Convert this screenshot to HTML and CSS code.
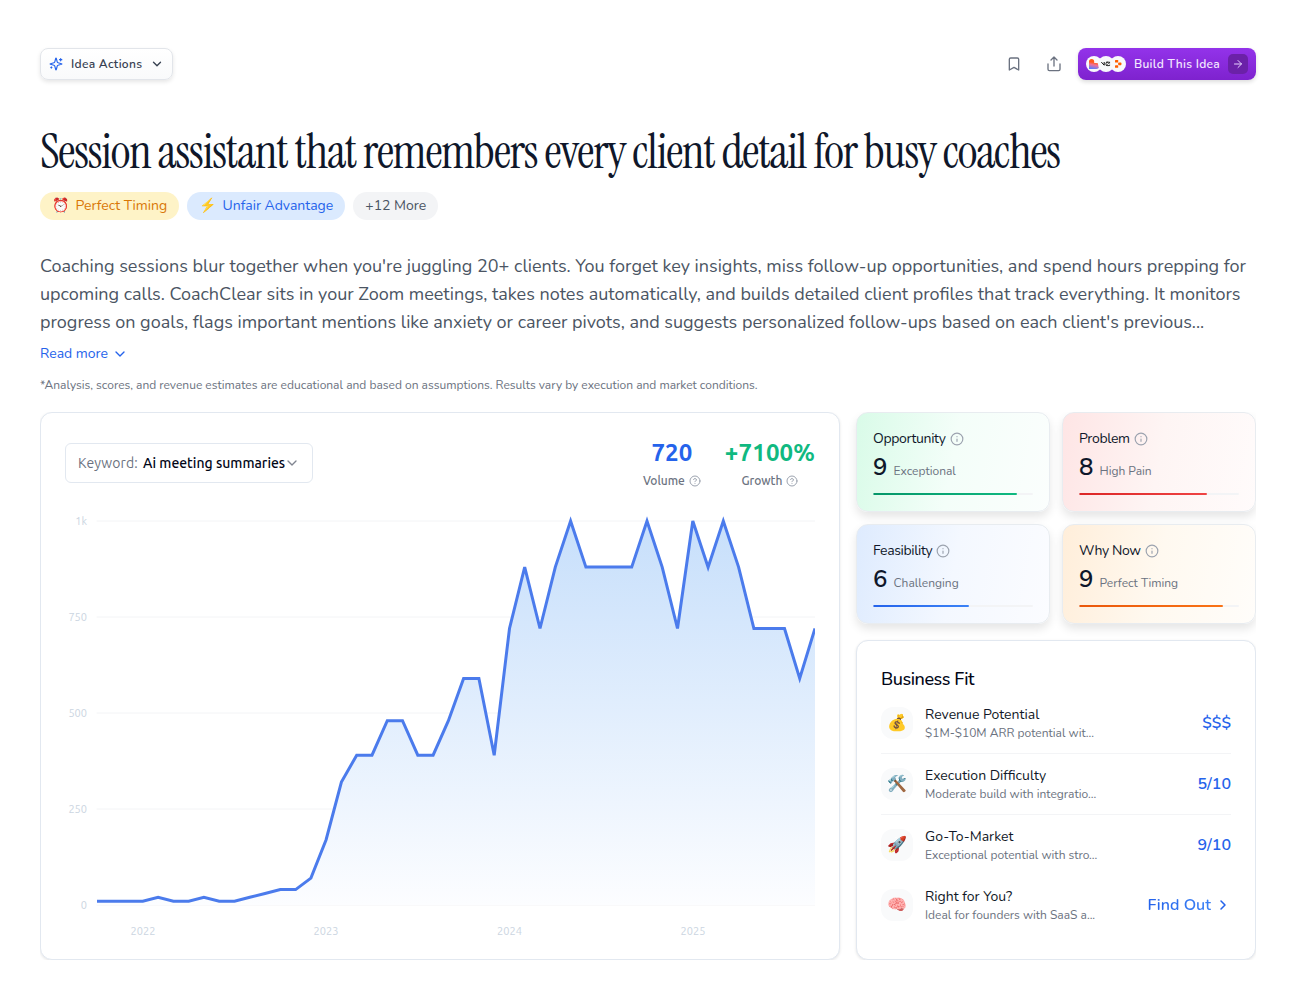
FILE: index.html
```html
<!DOCTYPE html>
<html lang="en">
<head>
<meta charset="utf-8">
<title>Session assistant for busy coaches</title>
<link rel="stylesheet" href="styles.css">
</head>
<body>
<main class="page">
  <header class="toolbar">
    <button class="btn-actions">
      <svg class="sparkles" viewBox="0 0 24 24"><path d="M9.94 15.5A2 2 0 0 0 8.5 14.06l-6.14-1.58a.5.5 0 0 1 0-.96L8.5 9.94A2 2 0 0 0 9.94 8.5l1.58-6.14a.5.5 0 0 1 .96 0L14.06 8.5a2 2 0 0 0 1.44 1.44l6.14 1.58a.5.5 0 0 1 0 .96L15.5 14.06a2 2 0 0 0-1.44 1.44l-1.58 6.14a.5.5 0 0 1-.96 0z"/><path d="M20 2.500v4M22 4.500h-4M4 17v2M5 18h-2"/></svg>
      <span class="label-actions">Idea Actions</span>
      <svg class="chev" viewBox="0 0 24 24"><path d="m6 9 6 6 6-6"/></svg>
    </button>
    <div class="toolbar-right">
      <svg class="tool" viewBox="0 0 24 24"><path d="m19 21-7-4-7 4V5a2 2 0 0 1 2-2h10a2 2 0 0 1 2 2z"/></svg>
      <svg class="tool share" viewBox="0 0 24 24"><path d="M3 12v8a2 2 0 0 0 2 2h14a2 2 0 0 0 2-2v-8M16.500 6 12 1.500 7.500 6M12 1.500V15"/></svg>
      <button class="btn-build">
        <span class="logos">
          <svg viewBox="0 0 16 16"><defs><linearGradient id="heart" x1="0.600" y1="0" x2="0.400" y2="1"><stop offset=".35" stop-color="#ff5a1f"/><stop offset=".6" stop-color="#f0709a"/><stop offset="1" stop-color="#5b7bff"/></linearGradient></defs><circle cx="8" cy="8" r="8" fill="#f8f9fb"/><path d="M3 5.700a2.600 2.600 0 0 1 5.200 0v1.200h2a3 3 0 0 1 0 6H3z" fill="url(#heart)"/></svg>
          <svg viewBox="0 0 16 16"><circle cx="8" cy="8" r="8" fill="#f8f9fb"/><path d="M3.600 6.400l2.600 2.800V6.400" fill="none" stroke="#111" stroke-width="1"/><rect x="8" y="6.200" width="4.200" height="3.400" rx="1" fill="none" stroke="#111" stroke-width=".9"/><path d="M8.300 9.400l3.500-3" stroke="#111" stroke-width=".6"/></svg>
          <svg viewBox="0 0 16 16"><circle cx="8" cy="8" r="8" fill="#f8f9fb"/><g fill="#ff5f00"><rect x="5" y="4" width="3.200" height="2.600" rx=".6"/><rect x="8.200" y="6.600" width="3.200" height="2.600" rx=".6"/><rect x="5" y="9.200" width="3.200" height="2.600" rx=".6"/></g></svg>
        </span>
        <span class="label-build">Build This Idea</span>
        <span class="arrow"><svg viewBox="0 0 24 24"><path d="M5 12h14M12 5l7 7-7 7"/></svg></span>
      </button>
    </div>
  </header>

  <h1 class="title">Session assistant that remembers every client detail for busy coaches</h1>

  <div class="tags">
    <span class="tag tag-amber"><span class="emoji">⏰</span>Perfect Timing</span>
    <span class="tag tag-blue"><span class="emoji">⚡</span>Unfair Advantage</span>
    <span class="tag tag-gray">+12 More</span>
  </div>

  <p class="summary">
    <span class="line">Coaching sessions blur together when you're juggling 20+ clients. You forget key insights, miss follow-up opportunities, and spend hours prepping for</span>
    <span class="line">upcoming calls. CoachClear sits in your Zoom meetings, takes notes automatically, and builds detailed client profiles that track everything. It monitors</span>
    <span class="line">progress on goals, flags important mentions like anxiety or career pivots, and suggests personalized follow-ups based on each client's previous...</span>
  </p>
  <a class="read-more">Read more<svg viewBox="0 0 24 24"><path d="m6 9 6 6 6-6"/></svg></a>
  <p class="note">*Analysis, scores, and revenue estimates are educational and based on assumptions. Results vary by execution and market conditions.</p>

  <div class="grid">
    <section class="panel trend">
      <div class="trend-head">
        <div class="select"><span class="kw">Keyword:</span><span class="kv">Ai meeting summaries</span><svg viewBox="0 0 24 24"><path d="m6 9 6 6 6-6"/></svg></div>
        <div class="stats">
          <div class="stat"><div class="num blue">720</div><div class="cap">Volume<svg viewBox="0 0 24 24"><circle cx="12" cy="12" r="10"/><path d="M9.090 9a3 3 0 0 1 5.830 1c0 2-3 3-3 3M12 17h.010"/></svg></div></div>
          <div class="stat"><div class="num green">+7100%</div><div class="cap">Growth<svg viewBox="0 0 24 24"><circle cx="12" cy="12" r="10"/><path d="M9.090 9a3 3 0 0 1 5.830 1c0 2-3 3-3 3M12 17h.010"/></svg></div></div>
        </div>
      </div>
      <svg class="chart" viewBox="0 0 750 438">
        <defs><linearGradient id="area" x1="0" y1="0" x2="0" y2="1"><stop offset="0" stop-color="#c7dffb"/><stop offset="1" stop-color="#fcfdff"/></linearGradient></defs>
        <path class="gridline" d="M32 16H750M32 112H750M32 208H750M32 304H750M32 400H750"/>
        <path class="area" fill="url(#area)" d="M32 396.200H77.800L93.100 392.300 108.400 396.200H123.700L138.900 392.300 154.200 396.200H169.500L184.800 392.300 200 388.500 215.300 384.600H230.600L245.900 373.100 261.100 334.700 276.400 277.100 291.700 250.200H307L322.300 215.700H337.500L352.800 250.200H368.100L383.400 215.700 398.600 173.400H413.900L429.200 250.200 444.500 123.500 459.700 62.100 475 123.500 490.300 62.100 505.600 16 520.900 62.100H566.700L582 16 597.200 62.100 612.500 123.500 627.800 16 643.100 62.100 658.300 16 673.600 62.100 688.900 123.500H719.500L734.700 173.400 750 123.500V400H32Z"/>
        <path class="series" d="M32 396.200H77.800L93.100 392.300 108.400 396.200H123.700L138.900 392.300 154.200 396.200H169.500L184.800 392.300 200 388.500 215.300 384.600H230.600L245.900 373.100 261.100 334.700 276.400 277.100 291.700 250.200H307L322.300 215.700H337.500L352.800 250.200H368.100L383.400 215.700 398.600 173.400H413.900L429.200 250.200 444.500 123.500 459.700 62.100 475 123.500 490.300 62.100 505.600 16 520.900 62.100H566.700L582 16 597.200 62.100 612.500 123.500 627.800 16 643.100 62.100 658.300 16 673.600 62.100 688.900 123.500H719.500L734.700 173.400 750 123.500"/>
        <g class="axis y"><text x="22" y="20">1k</text><text x="22" y="116">750</text><text x="22" y="212">500</text><text x="22" y="308">250</text><text x="22" y="404">0</text></g>
        <g class="axis x"><text x="78" y="430">2022</text><text x="261" y="430">2023</text><text x="444.500" y="430">2024</text><text x="628" y="430">2025</text></g>
      </svg>
    </section>

    <div class="side">
      <div class="scores">
        <article class="score s-green"><h3>Opportunity<svg viewBox="0 0 24 24"><circle cx="12" cy="12" r="10"/><path d="M12 16v-4M12 8h.010"/></svg></h3><p><b>9</b>Exceptional</p><div class="bar"><i style="width:90%"></i></div></article>
        <article class="score s-red"><h3>Problem<svg viewBox="0 0 24 24"><circle cx="12" cy="12" r="10"/><path d="M12 16v-4M12 8h.010"/></svg></h3><p><b>8</b>High Pain</p><div class="bar"><i style="width:80%"></i></div></article>
        <article class="score s-blue"><h3>Feasibility<svg viewBox="0 0 24 24"><circle cx="12" cy="12" r="10"/><path d="M12 16v-4M12 8h.010"/></svg></h3><p><b>6</b>Challenging</p><div class="bar"><i style="width:60%"></i></div></article>
        <article class="score s-orange"><h3>Why Now<svg viewBox="0 0 24 24"><circle cx="12" cy="12" r="10"/><path d="M12 16v-4M12 8h.010"/></svg></h3><p><b>9</b>Perfect Timing</p><div class="bar"><i style="width:90%"></i></div></article>
      </div>
      <section class="panel fit">
        <h2>Business Fit</h2>
        <div class="row"><span class="ico">💰</span><div class="txt"><h4>Revenue Potential</h4><p>$1M-$10M ARR potential wit...</p></div><strong>$$$</strong></div>
        <div class="row"><span class="ico">🛠️</span><div class="txt"><h4>Execution Difficulty</h4><p>Moderate build with integratio...</p></div><strong>5/10</strong></div>
        <div class="row plain"><span class="ico">🚀</span><div class="txt"><h4>Go-To-Market</h4><p>Exceptional potential with stro...</p></div><strong>9/10</strong></div>
        <div class="row plain"><span class="ico">🧠</span><div class="txt"><h4>Right for You?</h4><p>Ideal for founders with SaaS a...</p></div><strong class="find"><span>Find Out</span><svg viewBox="0 0 24 24"><path d="m9 18 6-6-6-6"/></svg></strong></div>
      </section>
    </div>
  </div>
</main>
</body>
</html>
```
FILE: styles.css
```css
* { box-sizing: border-box; }
body {
  margin: 0;
  background: #fff;
  color: #0f172a;
  font-family: Nunito, Lato, sans-serif;
}
h1, h2, h3, h4, p { margin: 0; font-weight: 400; }
button { font: inherit; border: 0; cursor: pointer; }
svg { fill: none; stroke: currentColor; stroke-width: 2; stroke-linecap: round; stroke-linejoin: round; flex: none; display: block; }
.page { width: 1296px; height: 1000px; padding: 48px 40px 0; overflow: hidden; }

/* Toolbar */
.toolbar { display: flex; justify-content: space-between; align-items: center; height: 32px; }
.btn-actions {
  display: flex; align-items: center; height: 32px; width: 133px; padding: 0 8px;
  border: 1px solid #e2e5ea; border-radius: 8px;
  background: linear-gradient(#fff, #f9fafb); color: #374151;
  font-size: 12px; font-weight: 600; letter-spacing: .3px;
  box-shadow: 0 2px 4px rgba(0, 0, 0, .1);
}
.sparkles { width: 14px; height: 14px; color: #2563eb; margin-right: 8px; }
.label-actions { width: 71px; text-align: left; white-space: nowrap; }
.btn-actions .chev { width: 14px; height: 14px; margin-left: 8px; stroke-width: 2.300; }
.toolbar-right { display: flex; align-items: center; }
.tool { width: 16px; height: 16px; color: #6b7280; margin-right: 24px; }
.tool.share { margin-right: 16px; }
.btn-build {
  display: flex; align-items: center; height: 32px; width: 178px; padding: 0 8px;
  border-radius: 8px; color: #f3e8ff;
  background: linear-gradient(#9333ea, #7e22ce);
  font-size: 12px; font-weight: 600; letter-spacing: .3px;
  box-shadow: 0 2px 4px rgba(0, 0, 0, .14);
}
.logos { display: flex; margin-right: 8px; }
.logos svg { width: 16px; height: 16px; stroke: none; }
.logos svg + svg { margin-left: -4px; }
.label-build { width: 86px; text-align: left; white-space: nowrap; }
.arrow { display: grid; place-items: center; width: 20px; height: 20px; margin-left: 8px; border-radius: 5px; background: #6b21a8; color: #e9d5ff; }
.arrow svg { width: 12px; height: 12px; }

/* Heading */
.title {
  margin-top: 48px; height: 48px; line-height: 48px;
  font-family: "Instrument Serif", "Liberation Serif", serif; font-size: 48px;
  letter-spacing: -1.200px; white-space: nowrap;
}
.tags { display: flex; gap: 8px; margin-top: 16px; font-size: 14px; line-height: 20px; }
.tag { display: flex; height: 28px; padding: 4px 12px; border-radius: 14px; white-space: nowrap; }
.emoji { width: 23.400px; margin-top: -1px; font-family: "Noto Color Emoji", sans-serif; }
.tag-amber { background: #fef3c7; color: #d97706; }
.tag-blue { background: #dbeafe; color: #2563eb; }
.tag-gray { background: #f3f4f6; color: #4b5563; }

.summary { margin-top: 32px; font-size: 18px; line-height: 28px; color: #4b5563; }
.line { display: block; white-space: nowrap; }
.read-more { display: flex; align-items: center; gap: 4px; height: 20px; margin-top: 7px; font-size: 14px; color: #2563eb; }
.read-more svg { width: 16px; height: 16px; margin-top: 2px; }
.note { margin-top: 14px; height: 16px; font-size: 12px; line-height: 16px; color: #6b7280; white-space: nowrap; }

.grid { display: grid; grid-template-columns: 800px 400px; grid-template-rows: 548px; gap: 16px; margin-top: 19px; overflow: hidden; }
.panel { border: 1px solid #e2e8f0; border-radius: 12px; background: #fff; box-shadow: 0 1px 3px rgba(0, 0, 0, .1); }

/* Keyword trend */
.trend { padding: 24px 24px 16px; font-family: Ubuntu, "Open Sans", sans-serif; }
.trend-head { display: flex; justify-content: space-between; height: 68px; }
.select { display: flex; align-items: center; width: 248px; height: 40px; margin-top: 6px; padding: 0 12px; border: 1px solid #e2e8f0; border-radius: 6px; font-size: 14px; white-space: nowrap; }
.kw { width: 65px; color: #6b7280; letter-spacing: .1px; }
.kv { width: 141px; color: #020617; font-weight: 500; }
.select svg { width: 16px; height: 16px; color: #808590; }
.stats { display: flex; gap: 24px; }
.stat { display: flex; flex-direction: column; align-items: center; }
.num { font-size: 24px; line-height: 32px; font-weight: 700; }
.num.blue { color: #2563eb; }
.num.green { color: #10b981; letter-spacing: .150px; }
.cap { display: flex; align-items: center; gap: 4px; font-size: 12px; line-height: 16px; margin-top: 4px; color: #6b7280; font-weight: 500; }
.cap svg { width: 12px; height: 12px; color: #9ca3af; }
.chart { width: 750px; height: 438px; }
.gridline { stroke: #f3f4f6; stroke-width: 1; }
.area { stroke: none; }
.series { stroke: #4b7bec; stroke-width: 3; stroke-linecap: butt; stroke-linejoin: miter; }
.axis { fill: #cbd5e1; stroke: none; font-size: 11px; }
.axis.y { text-anchor: end; }
.axis.x { text-anchor: middle; }

/* Score cards */
.side { display: flex; flex-direction: column; gap: 16px; }
.scores { display: grid; grid-template-columns: 194px 194px; grid-auto-rows: 100px; gap: 12px; }
.score { padding: 15px 16px; border: 1px solid #e8ecf0; border-radius: 12px; box-shadow: 0 5px 10px rgba(0, 0, 0, .1); }
.score h3 { display: flex; align-items: center; gap: 4px; height: 21px; font-size: 14px; font-weight: 400; letter-spacing: -.350px; white-space: nowrap; }
.score h3 svg { width: 14px; height: 14px; color: #9ca3af; }
.score p { display: flex; align-items: baseline; gap: 6.500px; margin-top: 2px; height: 32px; line-height: 32px; font-size: 12px; color: #6b7280; white-space: nowrap; }
.score b { width: 14px; font-size: 24px; font-weight: 600; color: #0f172a; }
.bar { height: 2px; margin-top: 10px; border-radius: 2px; background: #f3f4f6; overflow: hidden; }
.bar i { display: block; height: 2px; border-radius: 2px; }
.s-green { background: linear-gradient(100deg, #d9fbe8, #f4fef9 50%, #fbfefd); }
.s-green i { background: linear-gradient(90deg, #059669, #10b981); }
.s-red { background: linear-gradient(100deg, #fee5e5, #fef5f4 50%, #fffbfb); }
.s-red i { background: linear-gradient(90deg, #dc2626, #ef4444); }
.s-blue { background: linear-gradient(100deg, #deebfe, #f4f8ff 50%, #fbfcff); }
.s-blue i { background: linear-gradient(90deg, #2563eb, #3b82f6); }
.s-orange { background: linear-gradient(100deg, #ffeeda, #fff9f0 50%, #fffdfa); }
.s-orange i { background: linear-gradient(90deg, #ea580c, #f97316); }

/* Business fit */
.fit { height: 320px; padding: 24px; }
.fit h2 { height: 28px; line-height: 28px; font-size: 18px; font-weight: 500; letter-spacing: -.450px; color: #020617; white-space: nowrap; }
.row { display: flex; align-items: center; height: 61px; border-bottom: 1px solid #f3f4f6; }
.row.plain { height: 60px; border: 0; }
.ico { display: grid; place-items: center; width: 32px; height: 32px; margin-right: 12px; border-radius: 12px; background: #f9fafb; font-family: "Noto Color Emoji", sans-serif; font-size: 16px; line-height: 1; }
.txt { flex: 1; white-space: nowrap; }
.txt h4 { font-size: 14px; line-height: 20px; font-weight: 400; color: #111827; }
.txt p { font-size: 12px; line-height: 16px; color: #6b7280; }
.row strong { display: flex; align-items: center; font-size: 16px; font-weight: 600; color: #2563eb; }
.find span { background: linear-gradient(90deg, #2563eb, #3b82f6); background-clip: text; -webkit-background-clip: text; color: transparent; }
.find svg { width: 16px; height: 16px; margin-left: 4px; stroke-width: 2.300; }
```
